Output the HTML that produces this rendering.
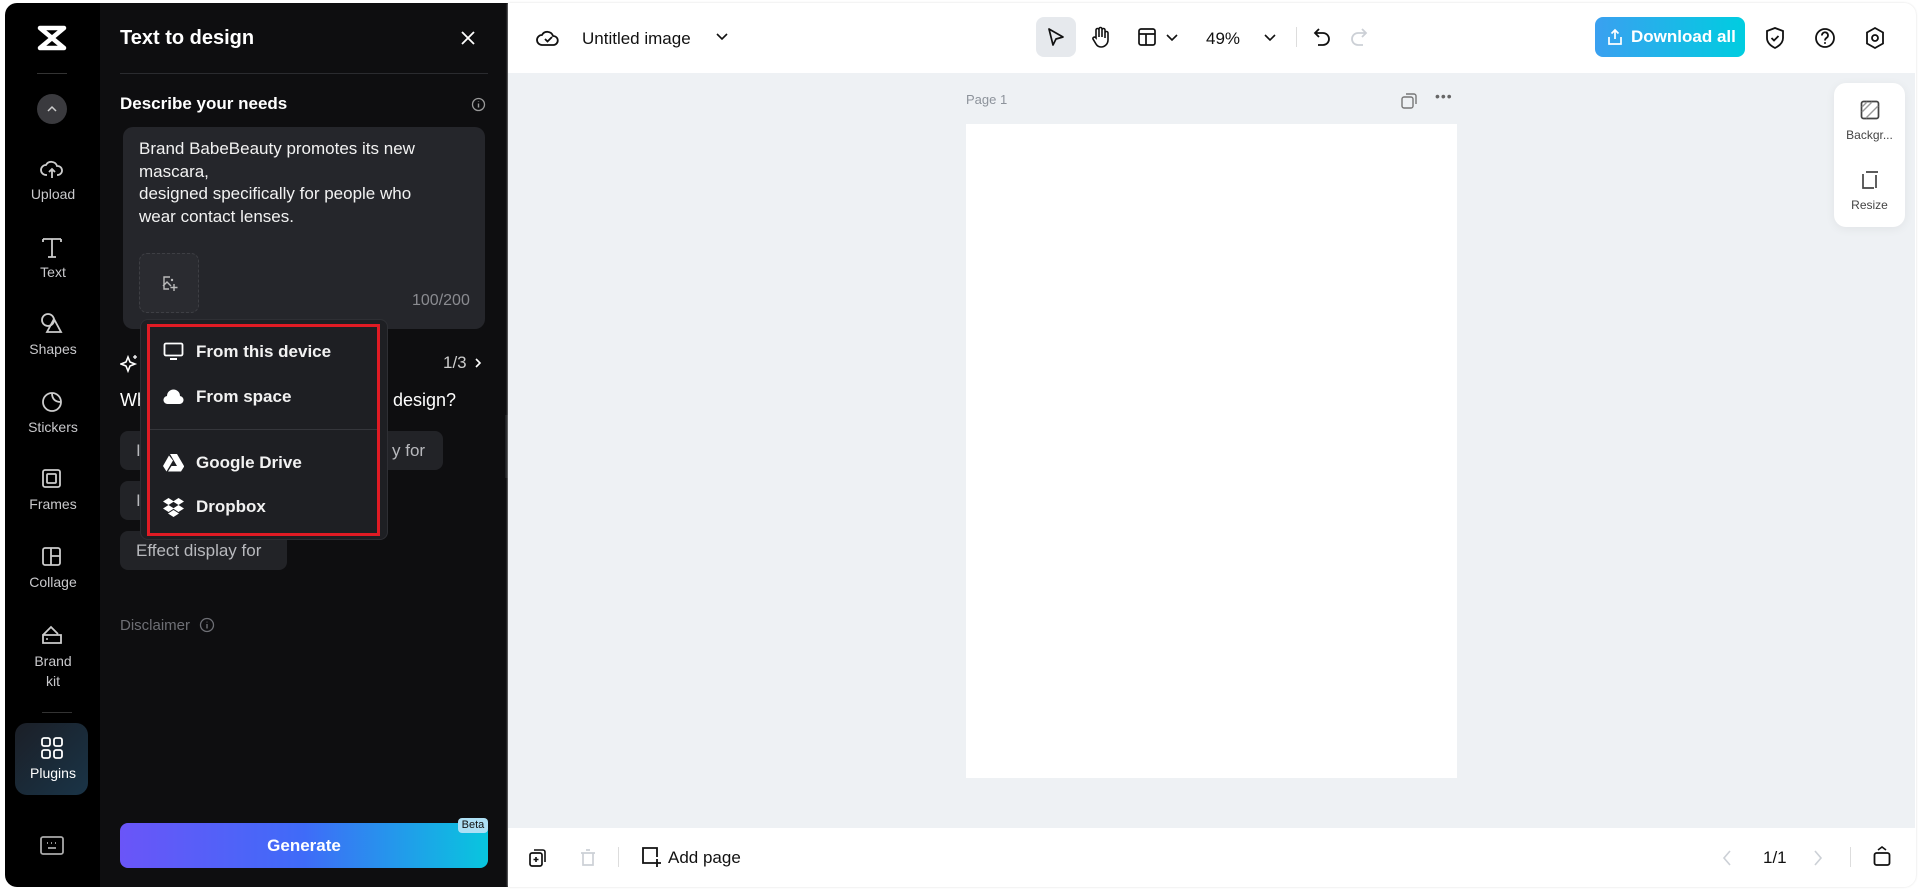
<!DOCTYPE html>
<html><head><meta charset="utf-8"><style>
*{margin:0;padding:0;box-sizing:border-box}
body{width:1920px;height:893px;background:#fff;font-family:"Liberation Sans",sans-serif;position:relative;overflow:hidden}
.a{position:absolute}
.side{left:5px;top:3px;width:96px;height:884px;background:#000;border-radius:12px 0 0 12px}
.si{position:absolute;left:0;width:96px;text-align:center;color:#c9c9cc;font-size:14px}
.panel{left:100px;top:3px;width:408px;height:884px;background:#0e0e10}
.w{color:#fff}
.chip{position:absolute;left:120px;height:39px;background:#222327;border-radius:8px;color:#b8b9bd;font-size:17px;line-height:39px;padding-left:16px}
.menu span{position:absolute;left:196px;color:#f2f2f2;font-size:17px;font-weight:bold;transform:translateY(-50%)}
.tb{color:#111;font-size:17px}
svg{position:absolute}
</style></head><body>
<!-- sidebar -->
<div class="a side"></div>
<svg style="left:36px;top:24px" width="32" height="28" viewBox="0 0 32 28"><path d="M4 4h24L4 24h24M4 4l24 20" stroke="#fff" stroke-width="4.5" fill="none" stroke-linejoin="round" stroke-linecap="round"/></svg>
<div class="a" style="left:37px;top:73px;width:30px;height:1px;background:#333"></div>
<div class="a" style="left:37px;top:94px;width:30px;height:30px;border-radius:50%;background:#3a3a3e"></div>
<svg style="left:45px;top:104px" width="14" height="10"><path d="M3 7l4-4 4 4" stroke="#ccc" stroke-width="1.5" fill="none"/></svg>
<svg style="left:40px;top:158px" width="24" height="22" viewBox="0 0 24 22"><path d="M7 17H6a5 5 0 010-10 6 6 0 0111 1 4 4 0 011 9h-1M12 20v-9M9 14l3-3 3 3" stroke="#ccc" stroke-width="1.8" fill="none"/></svg>
<div class="si" style="left:5px;top:186px">Upload</div>
<svg style="left:41px;top:236px" width="22" height="22"><path d="M2 3h18M11 3v18M7 21h8M2 3v3M20 3v3" stroke="#ccc" stroke-width="1.8" fill="none"/></svg>
<div class="si" style="left:5px;top:264px">Text</div>
<svg style="left:40px;top:312px" width="24" height="22"><circle cx="8" cy="8" r="6" stroke="#ccc" stroke-width="1.8" fill="none"/><path d="M14 7l7 13H7z" stroke="#ccc" stroke-width="1.8" fill="none"/></svg>
<div class="si" style="left:5px;top:341px">Shapes</div>
<svg style="left:40px;top:390px" width="24" height="24"><circle cx="12" cy="12" r="9" stroke="#ccc" stroke-width="1.8" fill="none"/><path d="M12 3c0 6 3 9 9 9" stroke="#ccc" stroke-width="1.8" fill="none"/></svg>
<div class="si" style="left:5px;top:419px">Stickers</div>
<svg style="left:41px;top:468px" width="22" height="22"><rect x="2" y="2" width="17" height="17" rx="2" stroke="#ccc" stroke-width="1.8" fill="none"/><rect x="6" y="6" width="9" height="9" rx="1" stroke="#ccc" stroke-width="1.8" fill="none"/></svg>
<div class="si" style="left:5px;top:496px">Frames</div>
<svg style="left:41px;top:546px" width="22" height="22"><rect x="2" y="2" width="17" height="17" rx="2" stroke="#ccc" stroke-width="1.8" fill="none"/><path d="M10 2v17M10 10h9" stroke="#ccc" stroke-width="1.8"/></svg>
<div class="si" style="left:5px;top:574px">Collage</div>
<svg style="left:40px;top:624px" width="24" height="22"><path d="M3 11l8-8 7 7M3 11h18v8H3z" stroke="#ccc" stroke-width="1.8" fill="none"/><circle cx="7" cy="15" r="1" fill="#ccc"/></svg>
<div class="si" style="left:5px;top:651px;line-height:20px">Brand<br>kit</div>
<div class="a" style="left:42px;top:712px;width:30px;height:1px;background:#333"></div>
<div class="a" style="left:15px;top:723px;width:73px;height:72px;border-radius:12px;background:linear-gradient(135deg,#1b1f27,#1a3447)"></div>
<svg style="left:41px;top:737px" width="22" height="22"><rect x="1" y="1" width="8" height="8" rx="2" stroke="#fff" stroke-width="1.8" fill="none"/><rect x="13" y="1" width="8" height="8" rx="2" stroke="#fff" stroke-width="1.8" fill="none"/><rect x="1" y="13" width="8" height="8" rx="2" stroke="#fff" stroke-width="1.8" fill="none"/><rect x="13" y="13" width="8" height="8" rx="2" stroke="#fff" stroke-width="1.8" fill="none"/></svg>
<div class="si" style="left:5px;top:765px;color:#fff">Plugins</div>
<svg style="left:40px;top:836px" width="24" height="20"><rect x="1" y="1" width="22" height="17" rx="2" stroke="#aaa" stroke-width="1.8" fill="none"/><path d="M7 7h1M11 7h1M15 7h1M8 12h8" stroke="#aaa" stroke-width="1.8"/></svg>
<!-- panel -->
<div class="a panel"></div>
<div class="a w" style="left:120px;top:27px;font-size:20px;font-weight:bold">Text to design</div>
<svg style="left:460px;top:30px" width="16" height="16"><path d="M2 2l12 12M14 2L2 14" stroke="#fff" stroke-width="1.8"/></svg>
<div class="a" style="left:120px;top:73px;width:368px;height:1px;background:#2a2b2f"></div>
<div class="a w" style="left:120px;top:94px;font-size:17px;font-weight:bold">Describe your needs</div>
<svg style="left:471px;top:97px" width="15" height="15"><circle cx="7.5" cy="7.5" r="6" stroke="#999" stroke-width="1.3" fill="none"/><path d="M7.5 6.5v4M7.5 4.5v.5" stroke="#999" stroke-width="1.4"/></svg>
<div class="a" style="left:123px;top:127px;width:362px;height:202px;background:#25262b;border-radius:10px"></div>
<div class="a" style="left:139px;top:138px;font-size:17px;line-height:22.5px;color:#f2f2f2;width:300px">Brand BabeBeauty promotes its new mascara,<br>designed specifically for people who wear contact lenses.</div>
<div class="a" style="left:139px;top:253px;width:60px;height:60px;border:1px dashed #3e3f44;border-radius:8px;background:#2a2b30"></div>
<svg style="left:161px;top:275px" width="17" height="17"><path d="M9 2H3v12h5M2 11l4-4 4 4" stroke="#bbb" stroke-width="1.4" fill="none"/><circle cx="11" cy="5" r="1.2" fill="#bbb"/><path d="M13 9v7M9.5 12.5h7" stroke="#bbb" stroke-width="1.4"/></svg>
<div class="a" style="left:412px;top:292px;font-size:16px;color:#8a8b90">100/200</div>
<!-- behind content -->
<svg style="left:120px;top:353px" width="20" height="20"><path d="M8 4l2 5 5 2-5 2-2 5-2-5-5-2 5-2z" stroke="#fff" stroke-width="1.6" fill="none"/><path d="M15 2v4M13 4h4" stroke="#fff" stroke-width="1.3"/></svg>
<div class="a" style="left:443px;top:353px;font-size:17px;color:#ccc">1/3</div>
<svg style="left:474px;top:357px" width="10" height="12"><path d="M2 2l4 4-4 4" stroke="#fff" stroke-width="1.6" fill="none"/></svg>
<div class="a w" style="left:120px;top:390px;font-size:18px">Wh</div>
<div class="a w" style="left:393px;top:390px;font-size:18px">design?</div>
<div class="chip" style="top:431px;width:323px">I<span style="position:absolute;left:272px">y for</span></div>
<div class="chip" style="top:481px;width:120px">I</div>
<div class="chip" style="top:531px;width:167px">Effect display for</div>
<div class="a" style="left:120px;top:617px;font-size:15px;color:#6e6f75">Disclaimer</div>
<svg style="left:199px;top:617px" width="16" height="16"><circle cx="8" cy="8" r="6.5" stroke="#6e6f75" stroke-width="1.3" fill="none"/><path d="M8 7v4.5M8 4.8v.6" stroke="#6e6f75" stroke-width="1.4"/></svg>
<div class="a" style="left:120px;top:823px;width:368px;height:45px;border-radius:8px;background:linear-gradient(90deg,#6a55f8,#3f6bf8 50%,#08c6de);color:#fff;font-size:17px;font-weight:bold;text-align:center;line-height:45px">Generate</div>
<div class="a" style="left:458px;top:818px;width:30px;height:15px;border-radius:4px;background:#aee0f5;color:#111;font-size:11px;text-align:center;line-height:15px">Beta</div>
<div class="a" style="left:505px;top:415px;width:11px;height:63px;background:#1e1f22;border-radius:0 8px 8px 0"></div>
<!-- dropdown -->
<div class="a menu" style="left:140px;top:319px;width:248px;height:221px;background:#1e1f23;border:1px solid #2e2f34;border-radius:8px"></div>
<div class="a" style="left:147px;top:324px;width:233px;height:212px;border:3px solid #e01b24"></div>
<div class="a" style="left:150px;top:429px;width:227px;height:1px;background:#35363b"></div>
<div class="menu">
<svg style="left:163px;top:342px" width="21" height="19"><rect x="1.5" y="1.5" width="18" height="12" rx="1.5" stroke="#fff" stroke-width="1.8" fill="none"/><path d="M7 17h7" stroke="#fff" stroke-width="2"/></svg>
<span style="top:352px">From this device</span>
<svg style="left:163px;top:388px" width="21" height="17"><path d="M5 16a4 4 0 01-1-8 6.5 6.5 0 0113 0 4 4 0 01-1 8z" fill="#fff"/></svg>
<span style="top:397px">From space</span>
<svg style="left:163px;top:453px" width="21" height="19"><path d="M7 1h7l7 12h-7zM6 2.5L0 13l3.5 5.5 6.5-11zM5 18.5h13l3.5-5.5H8.5z" fill="#fff"/></svg>
<span style="top:463px">Google Drive</span>
<svg style="left:163px;top:497px" width="21" height="20"><path d="M5.5 1L0 4.5 5.5 8 11 4.5zM15.5 1L10 4.5 15.5 8 21 4.5zM5.5 8L0 11.5l5.5 3.5 5.5-3.5zM15.5 8L10 11.5l5.5 3.5 5.5-3.5zM10.5 13l-5.5 3.5 5.5 3.5 5.5-3.5z" fill="#fff"/></svg>
<span style="top:507px">Dropbox</span>
</div>
<!-- main -->
<div class="a" style="left:508px;top:3px;width:1408px;height:884px;border-radius:0 12px 12px 0;box-shadow:0 0 2px #ddd"></div>
<div class="a" style="left:508px;top:73px;width:1407px;height:755px;background:#eef1f4"></div>
<svg style="left:536px;top:26px" width="24" height="22"><path d="M7 19H6a5 5 0 010-10 6 6 0 0111 1 4.5 4.5 0 01.5 9H7z" stroke="#111" stroke-width="1.8" fill="none"/><path d="M9 13l2.5 2.5L16 11" stroke="#111" stroke-width="1.8" fill="none"/></svg>
<div class="a tb" style="left:582px;top:29px">Untitled image</div>
<svg style="left:716px;top:33px" width="12" height="8"><path d="M1 1l5 5 5-5" stroke="#111" stroke-width="1.6" fill="none"/></svg>
<div class="a" style="left:1036px;top:17px;width:40px;height:40px;border-radius:8px;background:#e6e9ed"></div>
<svg style="left:1047px;top:27px" width="18" height="20"><path d="M2 2l14 8-7 2-3 6z" stroke="#111" stroke-width="1.7" fill="none" stroke-linejoin="round"/></svg>
<svg style="left:1090px;top:26px" width="20" height="22"><path d="M6 12V4a1.5 1.5 0 013 0v7V3a1.5 1.5 0 013 0v8V4a1.5 1.5 0 013 0v8-5a1.5 1.5 0 013 0v7a7 7 0 01-7 7 6 6 0 01-5-3l-3-5a1.5 1.5 0 012.5-1.5z" stroke="#111" stroke-width="1.6" fill="none"/></svg>
<svg style="left:1138px;top:28px" width="18" height="18"><rect x="1" y="1" width="16" height="16" rx="2" stroke="#111" stroke-width="1.7" fill="none"/><path d="M1 6h16M8 6v11" stroke="#111" stroke-width="1.7"/></svg>
<svg style="left:1166px;top:34px" width="12" height="8"><path d="M1 1l5 5 5-5" stroke="#111" stroke-width="1.6" fill="none"/></svg>
<div class="a tb" style="left:1206px;top:29px">49%</div>
<svg style="left:1264px;top:34px" width="12" height="8"><path d="M1 1l5 5 5-5" stroke="#111" stroke-width="1.6" fill="none"/></svg>
<div class="a" style="left:1296px;top:27px;width:1px;height:20px;background:#ddd"></div>
<svg style="left:1313px;top:27px" width="18" height="20"><path d="M6 2L2 6l4 4M2 6h8a6 6 0 010 12H5" stroke="#111" stroke-width="1.8" fill="none"/></svg>
<svg style="left:1350px;top:27px" width="18" height="20"><path d="M12 2l4 4-4 4M16 6H8a6 6 0 000 12h5" stroke="#ccd0d6" stroke-width="1.8" fill="none"/></svg>
<div class="a" style="left:1595px;top:17px;width:150px;height:40px;border-radius:8px;background:linear-gradient(90deg,#3aa0f0,#00cde0);color:#fff;font-size:17px;font-weight:bold;line-height:40px;padding-left:36px">Download all</div>
<svg style="left:1607px;top:28px" width="16" height="18"><path d="M8 11V2M4.5 5.5L8 2l3.5 3.5M2 9v7h12V9" stroke="#fff" stroke-width="1.7" fill="none"/></svg>
<svg style="left:1764px;top:26px" width="22" height="24"><path d="M11 2l8 3v7c0 5-4 8-8 10-4-2-8-5-8-10V5z" stroke="#111" stroke-width="1.8" fill="none"/><path d="M7.5 12l2.5 2.5 4.5-4.5" stroke="#111" stroke-width="1.8" fill="none"/></svg>
<svg style="left:1814px;top:27px" width="22" height="22"><circle cx="11" cy="11" r="9" stroke="#111" stroke-width="1.8" fill="none"/><path d="M8 8.5a3 3 0 115 2c-1 .7-2 1.3-2 3" stroke="#111" stroke-width="1.8" fill="none"/><circle cx="11" cy="16" r="1" fill="#111"/></svg>
<svg style="left:1864px;top:26px" width="22" height="24"><path d="M11 2l8 4.5v11L11 22l-8-4.5v-11z" stroke="#111" stroke-width="1.8" fill="none"/><circle cx="11" cy="12" r="3" stroke="#111" stroke-width="1.8" fill="none"/></svg>
<!-- canvas -->
<div class="a" style="left:966px;top:92px;font-size:13px;color:#8d939b">Page 1</div>
<svg style="left:1401px;top:93px" width="16" height="16"><rect x="1" y="4" width="11" height="11" rx="2" stroke="#777" stroke-width="1.4" fill="none"/><path d="M5 1h8a2 2 0 012 2v8" stroke="#777" stroke-width="1.4" fill="none"/></svg>
<div class="a" style="left:1435px;top:88px;font-size:14px;color:#666;letter-spacing:1px">•••</div>
<div class="a" style="left:966px;top:124px;width:491px;height:654px;background:#fff"></div>
<div class="a" style="left:1834px;top:83px;width:71px;height:144px;background:#fff;border-radius:12px;box-shadow:0 2px 10px rgba(0,0,0,.06)"></div>
<svg style="left:1860px;top:100px" width="20" height="20"><rect x="1.5" y="1.5" width="17" height="17" rx="2" stroke="#444" stroke-width="1.7" fill="none"/><path d="M2 12L12 2M6 18L18 6M2 7L7 2" stroke="#999" stroke-width="1.4"/></svg>
<div class="a" style="left:1834px;top:128px;width:71px;text-align:center;font-size:12px;color:#444">Backgr...</div>
<svg style="left:1860px;top:170px" width="20" height="20"><path d="M3 4v14h11M6 2h12M16 5v13" stroke="#444" stroke-width="1.7" fill="none"/></svg>
<div class="a" style="left:1834px;top:198px;width:71px;text-align:center;font-size:12px;color:#444">Resize</div>
<!-- bottom -->
<svg style="left:529px;top:849px" width="18" height="18"><rect x="1" y="4" width="12" height="13" rx="2" stroke="#111" stroke-width="1.7" fill="none"/><path d="M5 1h9a2 2 0 012 2v10M7 8v5M4.5 10.5h5" stroke="#111" stroke-width="1.6" fill="none"/></svg>
<svg style="left:579px;top:848px" width="18" height="20"><path d="M2 5h14M4 5v12h10V5M7 2h4" stroke="#ccd0d6" stroke-width="1.7" fill="none"/></svg>
<div class="a" style="left:618px;top:847px;width:1px;height:20px;background:#ddd"></div>
<svg style="left:641px;top:846px" width="22" height="22"><path d="M12 17H2V2h14v9" stroke="#111" stroke-width="1.8" fill="none"/><path d="M16 13v8M12 17h8" stroke="#111" stroke-width="1.8"/></svg>
<div class="a tb" style="left:668px;top:848px">Add page</div>
<svg style="left:1721px;top:849px" width="12" height="18"><path d="M9 2L3 9l6 7" stroke="#ccd0d6" stroke-width="1.6" fill="none"/></svg>
<div class="a tb" style="left:1763px;top:848px">1/1</div>
<svg style="left:1812px;top:849px" width="12" height="18"><path d="M3 2l6 7-6 7" stroke="#ccd0d6" stroke-width="1.6" fill="none"/></svg>
<div class="a" style="left:1850px;top:847px;width:1px;height:20px;background:#ddd"></div>
<svg style="left:1873px;top:845px" width="18" height="22"><rect x="1.5" y="8" width="15" height="12" rx="2" stroke="#111" stroke-width="1.8" fill="none"/><path d="M5 5l4-3 4 3" stroke="#111" stroke-width="1.6" fill="none"/></svg>
</body></html>
